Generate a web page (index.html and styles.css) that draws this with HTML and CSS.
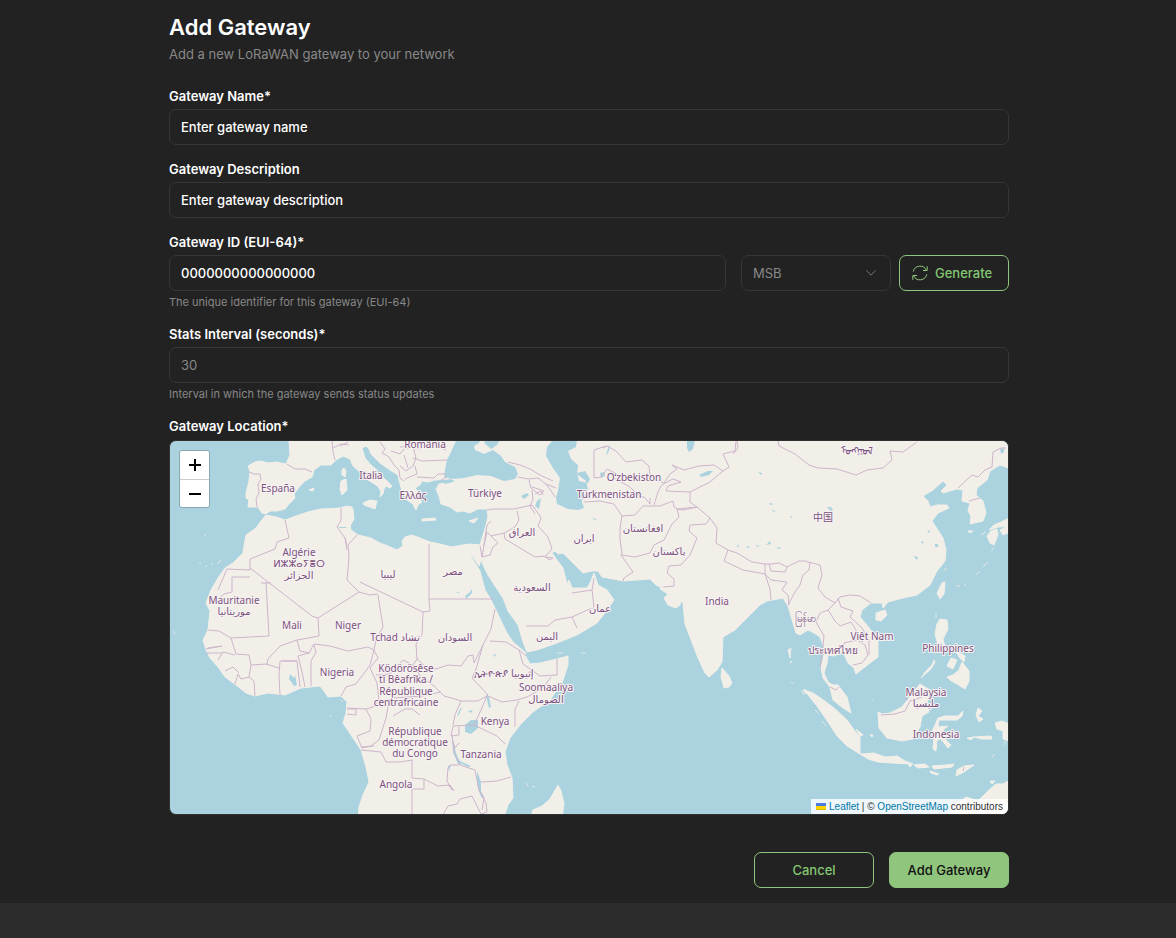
FILE: index.html
```html
<!DOCTYPE html>
<html lang="en">
<head>
    <meta charset="UTF-8">
    <meta name="viewport" content="width=device-width, initial-scale=1.0">
    <title>Add Gateway</title>
    <link rel="stylesheet" href="styles.css">
</head>
<body>

    <main class="page">
        <div class="container">
            <h1>Add Gateway</h1>
            <p class="subtitle">Add a new LoRaWAN gateway to your network</p>

            <form id="gatewayForm">
                <div class="field">
                    <label for="gatewayName">Gateway Name*</label>
                    <input type="text" id="gatewayName" placeholder="Enter gateway name">
                </div>

                <div class="field">
                    <label for="gatewayDescription">Gateway Description</label>
                    <input type="text" id="gatewayDescription" placeholder="Enter gateway description">
                </div>

                <div class="field">
                    <label for="gatewayId">Gateway ID (EUI-64)*</label>
                    <div class="id-row">
                        <input type="text" id="gatewayId" placeholder="0000000000000000">
                        <div class="select-wrap">
                            <select id="byteOrder" aria-label="Byte order">
                                <option>MSB</option>
                                <option>LSB</option>
                            </select>
                            <svg class="chevron" viewBox="0 0 12 12"><path d="M1.500 3.500 6 8.200l4.500-4.700"/></svg>
                        </div>
                        <button type="button" class="btn btn-outline btn-generate">
                            <svg class="refresh" viewBox="0 0 16 16">
                                <path d="M1.200 6.600A7 7 0 0 1 14.400 5.300M14.800 9.400A7 7 0 0 1 1.600 10.700"/>
                                <path d="M15.200 1.200v4.300h-4.300M.8 14.800v-4.300h4.300"/>
                            </svg>
                            Generate
                        </button>
                    </div>
                    <p class="help">The unique identifier for this gateway (EUI-64)</p>
                </div>

                <div class="field">
                    <label for="statsInterval">Stats Interval (seconds)*</label>
                    <input type="text" inputmode="numeric" id="statsInterval" class="muted" value="30">
                    <p class="help">Interval in which the gateway sends status updates</p>
                </div>

                <div class="field">
                    <h2 class="map-title">Gateway Location*</h2>
                    <div class="map">
                        <svg class="map-canvas" viewBox="170 441 838 373" preserveAspectRatio="xMidYMid slice" role="img" aria-label="World map">
                            <!-- mainland: Europe, Africa, Asia -->
                            <path class="land" d="M288 435L289 441 290 455 286 464 276 462 268 463 261 461 255 462 248 466 250 471 249 481 246 493 246 498 249 500 248 507 258 507 262 513 266 514 270 511 277 511 285 509 289 504 295 498 294 494 300 486 305 481 312 477 314 470 321 465 331 465 336 460 343 456 350 459 353 466 361 473 368 480 376 485 379 488 381 492 380 497 383 494 384 489 386 486 390 488 392 486 386 480 378 474 377 470 371 465 365 458 362 448 366 446 369 449 371 454 380 463 390 470 398 475 399 480 402 491 407 500 413 504 416 510 418 505 422 502 417 496 420 494 415 488 420 485 422 481 428 482 435 480 448 479 444 483 439 484 436 489 439 496 441 504 450 507 457 512 463 511 470 513 478 509 487 509 488 516 486 525 483 535 480 545 470 544 462 545 452 547 440 544 430 542 420 538 412 535 405 537 402 541 403 546 397 550 388 546 380 543 371 538 358 535 351 530 350 526 354 519 353 510 352 507 347 506 340 508 321 509 308 512 296 516 285 520 276 517 266 515 261 521 256 528 246 535 244 546 243 553 233 563 225 568 218 578 211 590 206 603 210 611 208 630 203 640 206 650 210 658 218 667 225 677 236 685 246 693 255 696 268 693 285 695 301 688 320 686 324 691 328 697 341 696 347 702 346 713 343 723 351 735 361 750 366 767 369 782 363 795 359 807 358 820 503 820 508 805 513 798 512 778 507 765 505 752 510 738 520 725 533 712 550 700 562 683 568 665 568 656 557 659 540 663 530 664 526 657 525 652 513 642 507 633 503 625 495 608 490 598 485 590 480 571 472 558 469 551 475 560 479 566 481 560 484 567 488 575 495 586 503 598 508 611 518 625 523 642 527 652 537 650 557 643 577 635 587 629 597 623 605 613 614 600 607 590 598 585 594 573 591 581 587 588 572 588 569 580 567 584 563 568 557 560 552 553 555 551 558 554 563 553 573 563 583 573 592 571 598 571 602 577 613 579 623 581 637 580 650 579 656 585 662 588 660 589 668 594 664 598 668 605 676 608 680 605 681 601 683 603 685 624 690 637 698 658 705 673 709 677 717 670 722 662 723 637 735 630 747 618 760 605 767 601 783 598 788 606 790 613 796 633 800 635 808 630 814 633 820 637 825 650 821 668 823 678 830 687 833 700 843 708 851 713 847 697 838 685 833 685 828 682 824 673 827 663 828 655 834 656 843 652 848 663 854 668 856 674 870 663 878 657 878 640 867 625 860 617 862 610 871 603 882 603 883 608 888 602 903 598 917 595 930 585 937 571 945 561 946 550 943 538 932 521 938 513 949 508 947 505 937 505 930 507 928 501 923 496 933 490 943 481 947 485 941 491 943 493 957 489 963 490 962 501 970 503 968 511 971 516 970 524 983 521 986 513 983 501 976 495 977 488 987 480 990 471 1000 465 1012 469 1012 435Z"/>
                            <!-- islands -->
                            <path class="land" d="M344 468L346 471 345 477 342 475 342 470ZM341 481L346 479 347 490 342 495 340 489ZM363 503L370 500 377 501 375 509 364 505ZM309 490L314 488 313 491ZM422 519L435 518 436 520 422 521ZM469 521L478 518 474 523ZM722 668L729 676 732 683 729 687 724 688 721 677ZM942 583L945 582 944 594 940 599 937 593ZM876 613L885 610 887 615 881 621 876 620ZM804 690L813 693 822 699 834 708 847 720 854 730 860 737 860 754 847 746 837 736 828 722 817 706ZM860 754L874 753 885 757 897 756 905 761 913 764 891 763 878 762 868 759ZM878 712L882 714 890 713 902 707 915 690 920 684 930 690 927 704 929 712 922 716 920 727 913 739 902 741 887 738 879 728ZM937 624L940 619 947 620 948 629 943 639 945 647 953 651 948 649 938 645 935 634ZM921 678L925 672 932 665 934 660 935 662 931 669 923 676ZM947 677L953 675 959 670 962 662 969 671 969 681 965 689 957 684 950 680ZM951 658L957 660 953 669 947 666ZM956 651L965 656 964 662 959 657ZM935 725L938 718 945 716 958 716 963 711 962 716 957 720 939 720 938 727 948 726 943 730 945 739 951 745 948 748 941 739 937 740 936 751 933 749 934 737 931 733ZM978 708L982 711 978 716 983 719 979 722 976 715ZM995 723L1002 721 1012 725 1012 742 1003 739 1003 731 997 729ZM974 737L991 736 992 739 982 739ZM967 738L974 737 971 740ZM908 764L912 765 910 767ZM914 765L925 764 929 767 918 768ZM932 766L946 765 954 764 952 767 934 769ZM957 770L964 766 974 765 964 772 956 776ZM930 771L939 774 937 775 931 773ZM856 729L863 735 860 736ZM870 735L873 735 872 737ZM945 820L953 807 966 797 978 801 988 791 996 784 1003 784 1012 779 1012 820ZM990 781L995 781 992 784ZM991 531L997 529 998 535 994 545 990 543 987 536ZM989 530L994 525 1001 522 1012 517 1012 526 998 527ZM1000 530L1008 526 1008 533 1003 535ZM968 531L973 531 970 533ZM530 820L533 810 542 806 550 799 558 785 561 791 564 803 562 820ZM800 573L801 572 801 575ZM788 650L791 648 790 658ZM790 662L791 661 791 663ZM803 690L806 690 806 694Z"/>
                            <path class="atolls" d="M199 563h2M205 567l2-2M211 565l2-2M217 564l4-4M204 535h2M173 631l2 3M330 715l1 2M341 700l2 2M557 653h6M581 653h5M526 783l2 3M532 786l3 1M790 648v8M791 682l3 2M801 690l3 5M872 699l1 1M936 618v-5M956 586h4M964 585h2M976 575l4-4M983 567l5-5M991 551l3-3M981 535l5-3M992 757l3-3M815 710l4 4M822 721l4 5M944 570l3-2M1005 745v-4"/>
                            <!-- seas and lakes -->
                            <path class="sea" d="M456 441L451 452 447 460 445 470 444 477 452 479 464 478 477 475 491 476 504 481 515 479 518 474 515 467 505 462 501 456 493 450 484 454 475 450 474 446 479 443 480 440ZM484 443L486 440 500 440 497 445 491 449 488 446ZM443 481l7-2 5 2-5 2-6 1ZM553 440L547 447 546 456 553 468 560 478 558 491 556 497 557 504 568 509 578 510 584 508 582 502 582 494 588 489 586 481 577 474 578 465 571 459 568 451 576 447 577 440ZM577 473l8-2 5 8-2 4-9-2ZM541 498l-4 3-2 5 4 3ZM521 496l6-3 2 2-5 4ZM465 725l6-5 7 0v8l-7 6-6-2ZM486 695l3 2 2 10-2 1ZM460 709l2-2-3 8-2 1ZM452 735l4 18 5 12-3-1-5-12ZM477 771l4 11 0 9 4 8-4-2-4-13ZM458 760l6 3 7 3-3 1-8-4ZM468 711l5-1-2 3ZM699 475l4-2 5-2 5 0-4 4-8 2ZM600 473l4-1 1 4-4 2ZM606 456l2-8 2-4-1 7ZM687 440l8 0-2 9-4 3-2-4ZM758 472l4 1-1 2ZM827 507l4 0 2 3-2 1ZM913 556l5 1-1 3ZM935 544l3 0 0 3-3 0ZM927 530l3 1-1 2ZM921 541l3 1-2 2ZM1000 449l4-1 0 4-3 2ZM769 503l5 1-4 1ZM772 510l4 1-3 1ZM790 516l3 1-2 1ZM766 545l4-4 1 3ZM777 547l5 1-4 1ZM746 547l3-1 1 1-2 1ZM756 546l2-1 1 1-2 1ZM738 544l1 3-2 0ZM592 518l5 1-2 1ZM493 655l3-1-1 3ZM465 596l5-4 2-3 0 4-6 6ZM456 592h4l-2 1ZM290 674l4 4 1-3 2 10-3 1-2-3-3-4ZM338 527h8v1h-6ZM448 766l3-1-2 6ZM582 496l6-2-2 4-5 2Z"/>
                            <!-- country borders -->
                            <path class="border" d="M287 464L295 469 305 469 312 472M249 472L254 474 260 474 261 479 258 484 259 493 256 499 257 507M332 441L333 452 335 460M340 446L348 442M333 448L341 444 349 445M380 442L385 449 382 453 389 457 394 465 399 470 400 478 404 481M391 451L400 454 404 449 413 447 416 458 413 466 406 471 400 466M413 458L422 461 447 460M415 466L417 474 405 479M417 477L434 478 438 474 446 474M441 480L447 477M400 447L410 446 419 449 432 444 446 450M404 455L408 468M508 462L520 465 530 469 540 475 553 481M518 477L528 479 538 478 546 484 556 488M529 480L531 488 540 495 544 491 532 487M532 490L533 499 530 506 535 514M535 494L541 491 543 495M546 484L551 491 555 497M487 510L493 509 514 509 532 505M532 505L538 513 541 518 538 526 548 537 552 549 545 557M517 511L519 520 515 527 504 533 505 539M504 533L491 536 487 532M491 536L498 543 493 547 490 555 482 557 484 545 487 532M484 545L487 525 491 521M505 539L535 557 545 556 549 560 553 558M480 546L482 557M545 557L553 558M429 544L429 599 493 599M429 599L430 611 423 612 362 583 360 582M423 612L422 635 416 644 417 659 413 665M341 508L341 520 337 527 345 538 347 546M357 535L348 545 349 557 347 580 359 592 370 595 378 594M345 538L347 550M285 520L289 538 277 542 275 549 250 559 250 570 227 569 218 590M250 568L312 616 318 618 359 592M318 618L319 636M250 577L232 577 232 592 224 594 214 604M266 582L269 636 231 638 219 631 208 630M261 583L271 583M319 636L297 640 280 646 268 659 267 664 251 665 249 655 236 654 231 638M297 640L300 651 309 653 314 644 330 646 348 651 368 647 374 650M374 650L376 640 383 627 378 595M374 650L370 665 356 684 346 687 341 696M314 645L316 652 311 661 311 686M309 653L298 656 302 672 305 687M297 661L280 661 279 676 280 695M282 661L297 661 300 687M266 664L279 668M251 665L249 677 254 681 255 696M249 677L241 679 238 674 235 684M225 671L233 667 239 673M218 660L223 652 235 655M208 648L222 646 206 649M206 653L222 653M374 650L378 658 370 668 377 683 379 700 373 707 366 709 347 708M413 665L403 660 390 674 376 675M417 659L426 667 436 669 448 665 461 666 468 656 473 655 474 663 483 645 491 629 495 609M413 665L421 677 434 686 444 696 455 699 461 701M441 692L422 696 408 697 393 698 378 705M461 701L478 701 487 696 488 695 472 678 476 669 483 645M490 641L506 642 519 650 526 656M519 650L523 664 540 676 557 675 557 659M488 696L502 702 517 700 527 697 543 688 551 677M487 696L481 710 474 725 453 726 451 736 459 735 459 727M459 743L455 748 453 742M474 725L497 736 505 744M515 727L515 709 519 701M461 701L455 715 453 725M452 735L454 752 460 765 475 770 479 790 484 798 482 810M481 782L497 781 511 777M361 750L381 752 386 762 400 762 412 760 412 778 424 779 424 789 412 789 412 820M424 779L438 786 450 785 454 791 448 785M448 768L450 765 459 765M448 768L447 781 452 790M472 796L460 799 457 804 448 806 440 820M479 790L486 803 487 812 481 814 472 796M347 709L356 709 356 715 347 714M366 709L371 719 370 731 357 736 362 748 371 746 379 740 386 718 389 701M361 747L374 746M393 716L405 709 412 709 420 715M526 626L548 626 555 620 572 617 577 628M572 617L594 607 592 590 572 593M592 590L594 578M603 448L607 446 616 451 626 462 642 460 649 466 650 475 656 480M594 478L594 450 606 446M594 478L601 477 607 469 615 473 614 478 630 487 635 492 645 498 650 504 650 498M584 502L600 501 614 504 622 516 620 528 620 540 622 553 621 555 633 572 624 578 623 581M622 516L635 515 643 506 660 506 673 501 674 507 677 509 697 507M656 480L664 483 670 474 677 469 672 465 684 470 699 466 714 465 723 471M723 471L729 467 723 454 735 451 736 441M723 471L710 482 690 492 666 491 668 486 681 482 673 479 665 483 661 486 658 492 654 505M690 492L690 502 697 507 683 510 677 509 679 517 672 524 664 540 654 545 650 553 635 557 621 555M697 507L710 518 706 524 690 525 689 531 697 538 690 555 681 565 669 566 667 573 674 579 674 586 663 587M710 518L717 528 716 543 728 550 724 561 743 570 765 574 765 564 752 562 737 553 728 550M765 564L772 564 779 563 787 567 785 572 771 571 769 564M765 574L771 580 787 582 782 590 788 595 789 605M765 574L770 589 771 600M787 567L799 561 806 561 810 563 809 570 803 575 800 585 795 592 788 605M809 562L820 565 822 575 818 588 825 597 835 603 840 597 850 595 860 596 871 603M835 603L828 610 820 613 816 622 824 636 822 655 820 668M828 610L835 621 840 626 851 622 856 630 857 640 865 645 868 655 862 663 853 665M838 598L841 607 853 611 850 617 862 628 869 640 869 655M843 651L844 643 857 640M830 687L836 690 839 687M737 441L738 448 733 454M778 441L779 446 795 454 809 465 818 468 837 469 856 475 867 470 883 468 892 460 890 451 903 452 917 442M958 488L972 475 978 477 985 470 992 467 993 452 1001 448 1006 448M969 501L980 498M881 715L895 714 905 711 910 701 922 697M903 697L908 700M963 771l1-4"/>
                            <!-- country names -->
                            <g class="names">
                                <text x="425" y="448">România</text>
                                <text x="278" y="492">España</text>
                                <text x="371" y="479">Italia</text>
                                <text x="413" y="499">Ελλάς</text>
                                <text x="485" y="497">Türkiye</text>
                                <text x="634" y="481">Oʻzbekiston</text>
                                <text x="609" y="498">Türkmenistan</text>
                                <text x="857" y="454">ᠮᠣᠩᠭᠣᠯ</text>
                                <text x="823" y="521">中国</text>
                                <text x="522" y="536">العراق</text>
                                <text x="584" y="542">ایران</text>
                                <text x="643" y="532">افغانستان</text>
                                <text x="669" y="555">پاکستان</text>
                                <text x="299" y="556">Algérie</text>
                                <text x="299" y="567">ⵍⵣⵣⴰⵢⴻⵔ</text>
                                <text x="299" y="579">الجزائر</text>
                                <text x="388" y="578">ليبيا</text>
                                <text x="453" y="575">مصر</text>
                                <text x="532" y="591">السعودية</text>
                                <text x="600" y="612">عمان</text>
                                <text x="717" y="605">India</text>
                                <text x="234" y="604">Mauritanie</text>
                                <text x="234" y="615">موريتانيا</text>
                                <text x="292" y="629">Mali</text>
                                <text x="348" y="629">Niger</text>
                                <text x="395" y="641">Tchad تشاد</text>
                                <text x="455" y="641">السودان</text>
                                <text x="547" y="640">اليمن</text>
                                <text x="337" y="676">Nigeria</text>
                                <text x="406" y="672">Ködörösêse</text>
                                <text x="406" y="683">tî Bêafrîka /</text>
                                <text x="406" y="695">République</text>
                                <text x="406" y="706">centrafricaine</text>
                                <text x="504" y="677">ኢትዮጵያ إثيوبيا</text>
                                <text x="546" y="691">Soomaaliya</text>
                                <text x="546" y="703">الصومال</text>
                                <text x="495" y="725">Kenya</text>
                                <text x="415" y="735">République</text>
                                <text x="415" y="746">démocratique</text>
                                <text x="415" y="757">du Congo</text>
                                <text x="481" y="758">Tanzania</text>
                                <text x="396" y="788">Angola</text>
                                <text x="805" y="622">မြန်မာ</text>
                                <text x="872" y="640">Việt Nam</text>
                                <text x="833" y="654">ประเทศไทย</text>
                                <text x="948" y="652">Philippines</text>
                                <text x="926" y="696">Malaysia</text>
                                <text x="926" y="707">مليسيا</text>
                                <text x="936" y="738">Indonesia</text>
                            </g>
                        </svg>
                        <div class="zoom-control">
                            <button type="button" aria-label="Zoom in"><svg viewBox="0 0 12 12"><path d="M6 0v12M0 6h12"/></svg></button>
                            <button type="button" aria-label="Zoom out"><svg viewBox="0 0 12 12"><path d="M0 6h12"/></svg></button>
                        </div>
                        <div class="attribution">
                            <svg class="flag" viewBox="0 0 10 7"><path fill="#4c7be1" d="M0 0h10v3H0z"/><path fill="#ffd500" d="M0 3h10v3H0z"/><path fill="#e0bc00" d="M0 6h10v1H0z"/></svg>
                            <a href="#">Leaflet</a> | © <a href="#">OpenStreetMap</a> contributors
                        </div>
                    </div>
                </div>

                <div class="actions">
                    <button type="button" class="btn btn-outline">Cancel</button>
                    <button type="submit" class="btn btn-primary">Add Gateway</button>
                </div>
            </form>
        </div>
    </main>

</body>
</html>
```
FILE: styles.css
```css
* {
    margin: 0;
    padding: 0;
    box-sizing: border-box;
}

body {
    font-family: Inter, sans-serif;
    font-size: 13px;
    background: #2c2c2c;
    color: #ffffff;
}

.page {
    background: #222222;
    padding: 12px 15px 15px 17px;
}

.container {
    max-width: 840px;
    margin: 0 auto;
}

h1 {
    font-size: 22px;
    font-weight: 600;
    line-height: 30px;
}

.subtitle {
    color: #888888;
    line-height: 16px;
    margin: 4px 0 26px;
}

.field {
    margin-bottom: 16px;
}

label,
.map-title {
    display: block;
    font-size: 13px;
    font-weight: 600;
    line-height: 16px;
    margin-bottom: 5px;
}

.map-title {
    margin-bottom: 6px;
}

input,
select {
    width: 100%;
    height: 36px;
    padding: 0 11px;
    border: 1px solid #363636;
    border-radius: 7px;
    background: #222222;
    color: #ffffff;
    font-family: inherit;
    font-size: 13px;
    font-weight: 500;
}

input::placeholder {
    color: #ffffff;
    opacity: 1;
}

input:focus,
select:focus {
    outline: none;
    border-color: #8fc57c;
}

input.muted,
select {
    color: #888888;
    font-weight: 400;
}

.help {
    color: #888888;
    font-size: 11px;
    line-height: 16px;
    margin-top: 3px;
}

.id-row {
    display: flex;
    gap: 8px;
}

.id-row input {
    flex: 1;
    min-width: 0;
    margin-right: 7px;
}

.select-wrap {
    position: relative;
    width: 150px;
}

select {
    appearance: none;
    cursor: pointer;
}

.chevron {
    position: absolute;
    right: 14px;
    top: 12px;
    width: 12px;
    height: 12px;
    fill: none;
    stroke: #777777;
    pointer-events: none;
}

.btn {
    width: 120px;
    height: 36px;
    border: 1px solid #8fc57c;
    border-radius: 7px;
    font-family: inherit;
    font-size: 13px;
    font-weight: 500;
    cursor: pointer;
}

.btn-outline {
    background: transparent;
    color: #84c773;
}

.btn-primary {
    background: #8fc57c;
    color: #111111;
}

.btn-generate {
    display: flex;
    align-items: center;
    gap: 7px;
    width: 110px;
    padding: 0 12px;
}

.refresh {
    width: 16px;
    height: 16px;
    fill: none;
    stroke: #8fc57c;
}

/* Map */
.map {
    position: relative;
    height: 375px;
    border: 1px solid #303030;
    border-radius: 7px;
    overflow: hidden;
    background: #aad3df;
}

.map-canvas {
    display: block;
    width: 100%;
    height: 100%;
}

.land {
    fill: #f2efe9;
    stroke: #f2efe9;
    stroke-linejoin: round;
}

.sea {
    fill: #aad3df;
}

.atolls {
    fill: none;
    stroke: #e3e8e4;
}

.border {
    fill: none;
    stroke: #cdb5cb;
    stroke-linejoin: round;
}

.names {
    fill: #7b527e;
    stroke: #f7f3f3;
    stroke-width: 2px;
    stroke-linejoin: round;
    paint-order: stroke;
    font-family: "Noto Sans", "DejaVu Sans", "Noto Sans CJK SC", sans-serif;
    font-size: 10px;
    text-anchor: middle;
}

.zoom-control {
    position: absolute;
    left: 9px;
    top: 9px;
    width: 31px;
    border: 1px solid #8aa9b2;
    border-radius: 3px;
    overflow: hidden;
}

.zoom-control button {
    display: flex;
    align-items: center;
    justify-content: center;
    width: 100%;
    height: 28px;
    border: none;
    background: #ffffff;
    cursor: pointer;
}

.zoom-control button + button {
    border-top: 1px solid #cccccc;
}

.zoom-control svg {
    width: 12px;
    height: 12px;
    stroke: #000000;
    stroke-width: 2;
}

.attribution {
    position: absolute;
    right: 0;
    bottom: 0;
    padding: 0 5px;
    background: rgba(255, 255, 255, 0.8);
    color: #333333;
    font-family: "Liberation Sans", Arial, sans-serif;
    font-size: 10px;
    line-height: 15px;
}

.attribution a {
    color: #0078a8;
    text-decoration: none;
}

.flag {
    width: 10px;
    height: 7px;
}

.actions {
    display: flex;
    justify-content: flex-end;
    gap: 15px;
    margin-top: 37px;
}
```
